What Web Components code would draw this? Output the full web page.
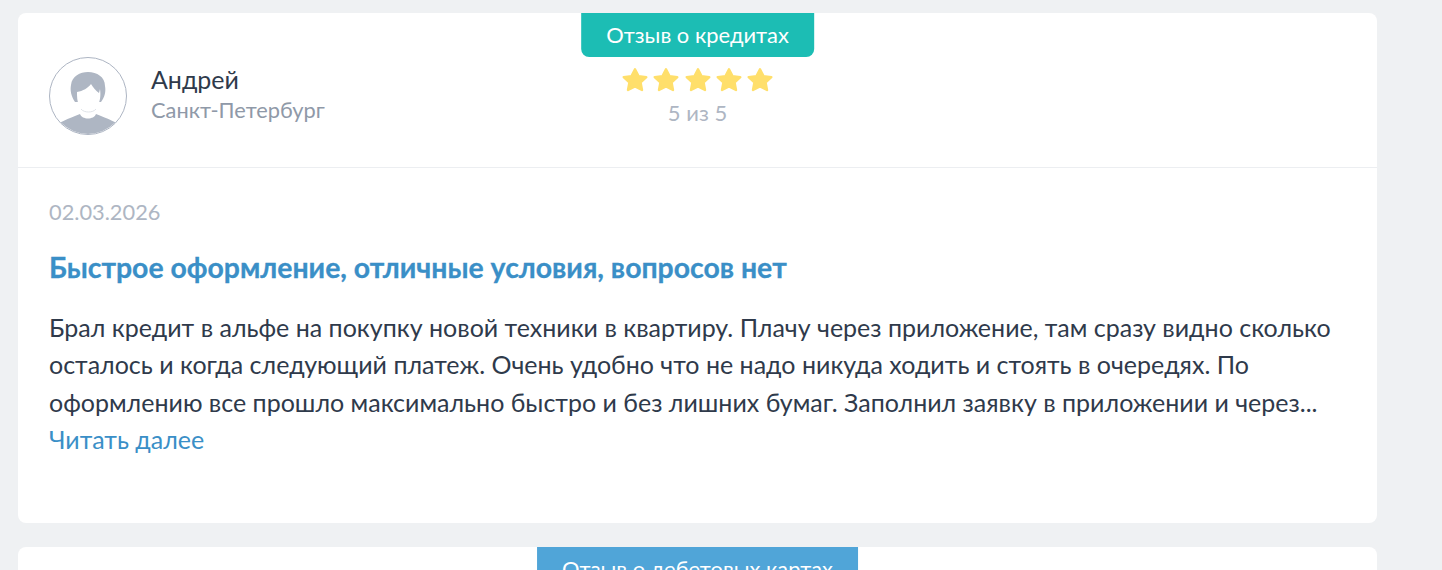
<!DOCTYPE html>
<html lang="ru">
<head>
<meta charset="utf-8">
<title>Отзывы</title>
<style>
  html, body { margin: 0; height: 570px; overflow: hidden; background: #eff1f3; }
  body {
    font-family: "Lato", "Noto Sans", "Open Sans", sans-serif;
    color: #2f3a4b;
    padding: 13px 65px 0 18px;
    box-sizing: border-box;
  }
</style>
</head>
<body>
<review-card tag="Отзыв о кредитах" color="#1cbdb4" rating="5">
  <span slot="name">Андрей</span>
  <span slot="city">Санкт-Петербург</span>
  <span slot="date">02.03.2026</span>
  <span slot="title">Быстрое оформление, отличные условия, вопросов нет</span>
  Брал кредит в альфе на покупку новой техники в квартиру. Плачу через приложение, там сразу видно сколько осталось и когда следующий платеж. Очень удобно что не надо никуда ходить и стоять в очередях. По оформлению все прошло максимально быстро и без лишних бумаг. Заполнил заявку в приложении и через...
</review-card>
<review-card tag="Отзыв о дебетовых картах" color="#50a5d8" rating="5"></review-card>

<script>
const starTemplate = document.createElement("template");
starTemplate.innerHTML = `
<style>
  :host { display: inline-flex; gap: 3.3px; }
  svg { width: 28px; height: 28px; display: block; }
</style>
<svg viewBox="0 0 28 28"><path fill="#ffdf6b" stroke="#ffdf6b" stroke-width="2.4" stroke-linejoin="round" d="M14 3.200L17.500 10.100L25.300 11.100L19.600 16.500L21 24L14 20.400L7 24L8.400 16.500L2.700 11.100L10.500 10.100Z"/></svg>
`;

class StarRow extends HTMLElement {
  connectedCallback() {
    const shadowRoot = this.attachShadow({ mode: "open" });
    const star = starTemplate.content.querySelector("svg");
    shadowRoot.appendChild(starTemplate.content.querySelector("style").cloneNode(true));
    const count = Number(this.getAttribute("count"));
    for (let i = 0; i < count; i++) {
      shadowRoot.appendChild(star.cloneNode(true));
    }
  }
}

const avatarTemplate = document.createElement("template");
avatarTemplate.innerHTML = `
<style>
  :host {
    display: block;
    width: 78px;
    height: 78px;
    box-sizing: border-box;
    border: 1px solid #adb5c3;
    border-radius: 50%;
    overflow: hidden;
    background: #fff;
    flex: none;
  }
  svg { display: block; width: 100%; height: 100%; }
</style>
<svg viewBox="0 0 76 76">
  <path fill="#aeb6c3" d="M4 70C8 64 18 61 30 56C32 62 44 62 46 56C58 61 68 64 72 70L72 80L4 80Z"/>
  <path fill="#aeb6c3" d="M25 44C21 38 20 32 21 27C22 18 30 14 38 14C47 14 55 19 55 28C56 33 55 39 51 44Z"/>
  <path fill="#fff" d="M27 34C33 33 38 30 41 26C43 29 46 33 49 35L50 31C51 38 50 43 48 47C46 51 42 54.500 38.500 54.500C35 54.500 31 51 29 47C27 43 27 39 27 34Z"/>
  <path fill="none" stroke="#dfe3e8" stroke-width="1" d="M31 51C34 55 43 55 46 51"/>
</svg>
`;

class UserAvatar extends HTMLElement {
  connectedCallback() {
    const shadowRoot = this.attachShadow({ mode: "open" });
    shadowRoot.appendChild(avatarTemplate.content.cloneNode(true));
  }
}

const cardTemplate = document.createElement("template");
cardTemplate.innerHTML = `
<style>
  :host {
    display: block;
    position: relative;
    background: #fff;
    border-radius: 8px;
    margin-bottom: 24px;
    height: 510px;
  }
  #tag {
    position: absolute;
    top: 0;
    left: 50%;
    transform: translateX(-50%);
    height: 44px;
    line-height: 44px;
    padding: 0 25.500px;
    border-radius: 0 0 8px 8px;
    color: #fff;
    font-size: 21.900px;
    white-space: nowrap;
  }
  #head {
    display: grid;
    grid-template-columns: 1fr auto 1fr;
    padding: 44px 31px 32px;
    border-bottom: 1px solid #eceef1;
  }
  #author { display: flex; align-items: center; gap: 24px; }
  #name { font-size: 25px; line-height: 30px; margin-top: -3px; }
  #city { font-size: 21.800px; line-height: 30px; color: #8f99a8; margin-top: 1px; }
  #rating {
    display: flex;
    flex-direction: column;
    align-items: center;
    padding-top: 9px;
  }
  #score { font-size: 22px; line-height: 28px; color: #aeb6c3; margin-top: 5px; }
  #body { padding: 29px 31px 0; }
  #date { font-size: 21.800px; line-height: 30px; color: #aeb6c3; }
  #title {
    font-size: 28.400px;
    line-height: 34px;
    font-weight: 700;
    color: #3a8fc7;
    -webkit-text-stroke: 0.3px #3a8fc7;
    margin-top: 23px;
  }
  #text { font-size: 25px; line-height: 37.400px; margin-top: 25px; }
  a { color: #3a8fc7; text-decoration: none; display: block; }
</style>
<div id="tag"></div>
<div id="head">
  <div id="author">
    <user-avatar></user-avatar>
    <div>
      <div id="name"><slot name="name"></slot></div>
      <div id="city"><slot name="city"></slot></div>
    </div>
  </div>
  <div id="rating">
    <star-row></star-row>
    <div id="score"></div>
  </div>
</div>
<div id="body">
  <div id="date"><slot name="date"></slot></div>
  <div id="title"><slot name="title"></slot></div>
  <div id="text"><slot></slot><a href="#">Читать далее</a></div>
</div>
`;

class ReviewCard extends HTMLElement {
  connectedCallback() {
    const shadowRoot = this.attachShadow({ mode: "open" });
    const content = cardTemplate.content.cloneNode(true);
    const tag = content.getElementById("tag");
    tag.textContent = this.getAttribute("tag");
    tag.style.background = this.getAttribute("color");
    const rating = this.getAttribute("rating");
    content.querySelector("star-row").setAttribute("count", rating);
    content.getElementById("score").textContent = rating + " из 5";
    shadowRoot.appendChild(content);
  }
}

customElements.define("star-row", StarRow);
customElements.define("user-avatar", UserAvatar);
customElements.define("review-card", ReviewCard);
</script>
</body>
</html>
